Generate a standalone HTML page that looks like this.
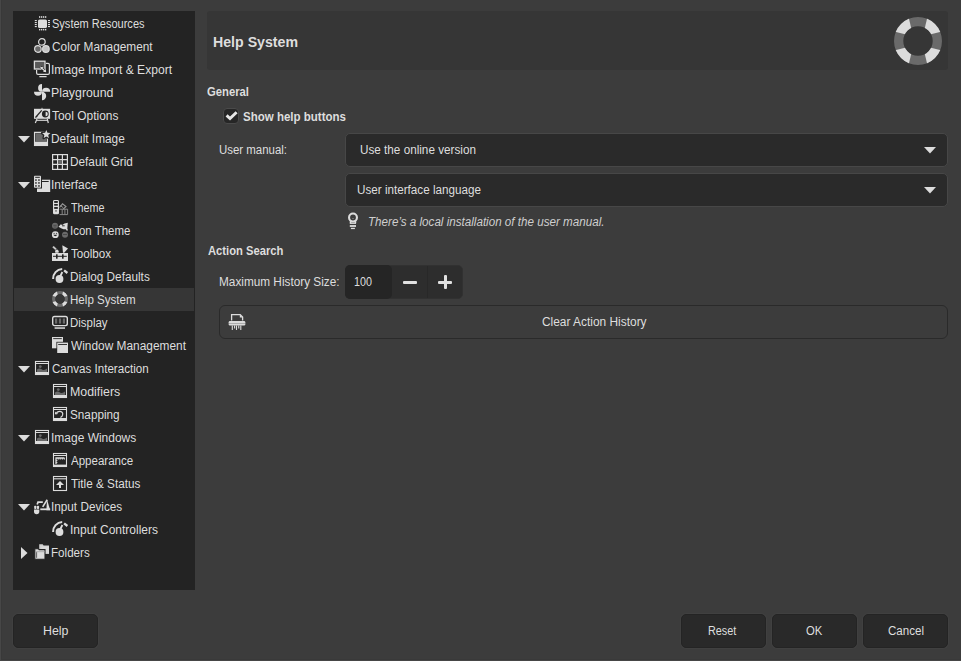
<!DOCTYPE html>
<html><head><meta charset="utf-8"><style>
html,body{margin:0;padding:0;}
body{width:961px;height:661px;background:#3c3c3c;position:relative;overflow:hidden;font-family:"Liberation Sans",sans-serif;}
.ic{position:absolute;display:block;}
.ic svg{display:block;}
.t{position:absolute;white-space:nowrap;line-height:1em;transform-origin:0 0;}
.t.c{text-align:center;}
.box{position:absolute;box-sizing:border-box;}
</style></head><body>
<div class="box" style="left:0;top:0;width:1px;height:661px;background:#474747"></div><div class="box" style="left:1px;top:0;width:1px;height:660px;background:#393939"></div><div class="box" style="left:1px;top:659px;width:960px;height:1px;background:#393939"></div><div class="box" style="left:0;top:660px;width:961px;height:1px;background:#464646"></div>
<div class="box" style="left:13px;top:11px;width:182px;height:579px;background:#232323"></div>
<div class="box" style="left:14px;top:288px;width:180px;height:23px;background:#363636"></div>
<div class="ic" style="left:34px;top:15px"><svg width="16" height="17" viewBox="0 0 16 17" style="overflow:visible"><rect x="4" y="4.4" width="9" height="8.6" rx="1.6" fill="#dcdcdc"/><rect x="5" y="1.2" width="1.3" height="1.6" fill="#dcdcdc"/><rect x="5" y="13.9" width="1.3" height="1.5" fill="#dcdcdc"/><rect x="0.8" y="5" width="2" height="1.1" fill="#dcdcdc"/><rect x="14" y="5" width="2" height="1.1" fill="#dcdcdc"/><rect x="7" y="1.2" width="1.3" height="1.6" fill="#dcdcdc"/><rect x="7" y="13.9" width="1.3" height="1.5" fill="#dcdcdc"/><rect x="0.8" y="7" width="2" height="1.1" fill="#dcdcdc"/><rect x="14" y="7" width="2" height="1.1" fill="#dcdcdc"/><rect x="9" y="1.2" width="1.3" height="1.6" fill="#dcdcdc"/><rect x="9" y="13.9" width="1.3" height="1.5" fill="#dcdcdc"/><rect x="0.8" y="9" width="2" height="1.1" fill="#dcdcdc"/><rect x="14" y="9" width="2" height="1.1" fill="#dcdcdc"/><rect x="11" y="1.2" width="1.3" height="1.6" fill="#dcdcdc"/><rect x="11" y="13.9" width="1.3" height="1.5" fill="#dcdcdc"/><rect x="0.8" y="11" width="2" height="1.1" fill="#dcdcdc"/><rect x="14" y="11" width="2" height="1.1" fill="#dcdcdc"/></svg></div><div class="ic" style="left:34px;top:38px"><svg width="16" height="17" viewBox="0 0 16 17" style="overflow:visible"><circle cx="7.9" cy="3.9" r="3.3" fill="none" stroke="#dcdcdc" stroke-width="1.2"/><circle cx="3.9" cy="11" r="3.3" fill="#6a6a6a" stroke="#dcdcdc" stroke-width="1.2"/><circle cx="11.9" cy="11" r="3.3" fill="#c4c4c4" stroke="#dcdcdc" stroke-width="1.2"/></svg></div><div class="ic" style="left:34px;top:61px"><svg width="16" height="17" viewBox="0 0 16 17" style="overflow:visible"><path d="M4 2.4H14A1.4 1.4 0 0 1 15.4 3.8V12A1.4 1.4 0 0 1 14 13.4H4A1.4 1.4 0 0 1 2.6 12V3.8Z" fill="#232323" stroke="#dcdcdc" stroke-width="1.2"/><rect x="-0.4" y="-0.6" width="12.4" height="9.6" fill="#232323"/><rect x="0.4" y="0.2" width="10.6" height="7.8" fill="#5a5a5a" stroke="#dcdcdc" stroke-width="1.3"/><path d="M6.5 6L12 11" stroke="#232323" stroke-width="3"/><path d="M7 6.5L11.5 10.5" stroke="#dcdcdc" stroke-width="1.4"/><path d="M6.3 5.8L9.5 6.3L6.8 9Z M12.2 11.2L9 10.7L11.7 8Z" fill="#dcdcdc"/><rect x="5.2" y="15" width="7.5" height="1.3" rx="0.6" fill="#dcdcdc"/></svg></div><div class="ic" style="left:34px;top:84px"><svg width="16" height="17" viewBox="0 0 16 17" style="overflow:visible"><g fill="#dcdcdc"><path d="M8 7.8V0A3.9 3.9 0 0 0 8 7.8Z"/><path d="M8 7.8H16.2A4.1 4.1 0 0 0 8 7.8Z"/><path d="M8 7.8V16.2A4.2 4.2 0 0 0 8 7.8Z"/><path d="M8 7.8H0A4 4 0 0 0 8 7.8Z"/></g></svg></div><div class="ic" style="left:34px;top:107px"><svg width="16" height="17" viewBox="0 0 16 17" style="overflow:visible"><path d="M6.7 1.6Q8 -0.3 9.3 1.6Z" fill="#dcdcdc"/><rect x="0" y="1.8" width="16.1" height="10" fill="#dcdcdc"/><path d="M1.5 10.5L7.7 3.3" stroke="#232323" stroke-width="1.2"/><path d="M1.2 10.8L3 8.8L3.6 9.5Z" fill="#232323"/><circle cx="11.3" cy="7" r="3.4" fill="#232323"/><path d="M11.6 4.8A2.2 2.2 0 0 1 11.6 9.2Z" fill="#dcdcdc"/><path d="M1.3 16L3 12M14.3 16L13.3 12" stroke="#dcdcdc" stroke-width="1.2" fill="none"/><path d="M3 13.3H13" stroke="#dcdcdc" stroke-width="1.1"/></svg></div><div class="ic" style="left:34px;top:130px"><svg width="16" height="17" viewBox="0 0 16 17" style="overflow:visible"><rect x="0.6" y="2.4" width="12.8" height="13" fill="none" stroke="#dcdcdc" stroke-width="1.3"/><rect x="2" y="3.3" width="10.3" height="8.4" fill="#6a6a6a"/><rect x="0" y="11.8" width="14" height="4.2" fill="#dcdcdc"/><path d="M12.30 0.00L13.48 2.78L16.48 3.04L14.20 5.02L14.89 7.96L12.30 6.40L9.71 7.96L10.40 5.02L8.12 3.04L11.12 2.78Z" fill="#232323" stroke="#232323" stroke-width="2.6" stroke-linejoin="round"/><path d="M12.30 0.00L13.48 2.78L16.48 3.04L14.20 5.02L14.89 7.96L12.30 6.40L9.71 7.96L10.40 5.02L8.12 3.04L11.12 2.78Z" fill="#dcdcdc"/></svg></div><svg class="ic" style="left:18px;top:136px" width="12" height="7" viewBox="0 0 12 7"><path d="M0 0H12L6 6.5Z" fill="#dcdcdc"/></svg><div class="ic" style="left:52px;top:153px"><svg width="16" height="17" viewBox="0 0 16 17" style="overflow:visible"><rect x="0.6" y="1.6" width="14.8" height="14.8" fill="none" stroke="#dcdcdc" stroke-width="1.2"/><path d="M5.6 1.6V16.4M10.4 1.6V16.4M0.6 6.6H15.4M0.6 11.4H15.4" stroke="#dcdcdc" stroke-width="1.2"/><rect x="6.2" y="7.2" width="3.6" height="3.6" fill="#6a6a6a"/></svg></div><div class="ic" style="left:34px;top:176px"><svg width="16" height="17" viewBox="0 0 16 17" style="overflow:visible"><rect x="2.4" y="3.2" width="14.3" height="13.3" fill="#232323"/><rect x="3" y="3.7" width="13.2" height="12.3" fill="#dcdcdc"/><path d="M8 5.5H14.7" stroke="#232323" stroke-width="1"/><rect x="-0.5" y="-0.7" width="8.5" height="13.2" fill="#232323"/><rect x="0" y="-0.2" width="7" height="12" rx="0.8" fill="#dcdcdc"/><rect x="1.2" y="0.8" width="4.6" height="1" fill="#232323"/><g fill="#232323"><rect x="1.2" y="3.3" width="1.5" height="1.5"/><rect x="4.2" y="3.3" width="1.5" height="1.5"/><rect x="1.2" y="6.2" width="1.5" height="1.5"/><rect x="4.2" y="6.2" width="1.5" height="1.5"/><rect x="1.2" y="9.2" width="1.5" height="1.5"/><rect x="4.2" y="9.2" width="1.5" height="1.5"/></g></svg></div><svg class="ic" style="left:18px;top:182px" width="12" height="7" viewBox="0 0 12 7"><path d="M0 0H12L6 6.5Z" fill="#dcdcdc"/></svg><div class="ic" style="left:52px;top:199px"><svg width="16" height="17" viewBox="0 0 16 17" style="overflow:visible"><path d="M7.6 10.2H15.6V15.6H7.6" fill="none" stroke="#888" stroke-width="1"/><path d="M10.2 10.2V15.6M12.9 10.2V15.6" stroke="#888" stroke-width="1"/><path d="M7.5 8.5L10.5 4.8L14 7.5L11.2 10.2" fill="none" stroke="#999" stroke-width="1.1"/><path d="M8.3 6.5L11.2 8.7" stroke="#999" stroke-width="0.9"/><rect x="1" y="1" width="6" height="14.3" rx="1.4" fill="#dcdcdc"/><g fill="#232323"><rect x="2.2" y="2" width="3.6" height="1.9"/><rect x="2.2" y="5" width="3.6" height="1.7"/><rect x="2.2" y="8" width="3.6" height="1.9"/><rect x="3.4" y="11.3" width="1.2" height="1.2"/></g></svg></div><div class="ic" style="left:52px;top:222px"><svg width="16" height="17" viewBox="0 0 16 17" style="overflow:visible"><circle cx="3" cy="3.7" r="3" fill="#6a6a6a"/><path d="M1.3 3.3H4.7M1.6 5H4.4" stroke="#444" stroke-width="0.8"/><circle cx="3.3" cy="12.7" r="3.4" fill="#dcdcdc"/><path d="M1.2 12.8Q3.3 15.5 5.4 12.8Z" fill="#232323"/><path d="M1.5 11.4H2.7M3.9 11.4H5.1" stroke="#232323" stroke-width="0.8"/><circle cx="13" cy="12.7" r="3" fill="#6a6a6a"/><path d="M11 12.5H15" stroke="#444" stroke-width="0.9"/><path d="M6.5 4.8L8.8 2.2L10.2 3L12.5 1.6L15.8 0.7L15.3 6.5L16 8.3L14.8 8.7L13.8 7.2L11.5 7.3L9 6.2Z" fill="#dcdcdc"/><path d="M10 3.8H12.7" stroke="#232323" stroke-width="0.9"/></svg></div><div class="ic" style="left:52px;top:245px"><svg width="16" height="17" viewBox="0 0 16 17" style="overflow:visible"><rect x="0" y="8" width="16" height="8" fill="#dcdcdc"/><path d="M1 11.3H14.8" stroke="#232323" stroke-width="1"/><rect x="4" y="9.3" width="1.6" height="4.4" fill="#232323"/><rect x="10" y="9.3" width="1.6" height="4.4" fill="#232323"/><path d="M0.3 2.2L1.7 1L4.7 3.7L3.3 5Z" fill="#c8c8c8"/><path d="M3 5.8L5 4.3L6.8 6L6.5 7.7L3.3 7.7Z" fill="#dcdcdc"/><path d="M10.3 0.3L16 3.5L12.2 7.8L11 7.8Z" fill="#dcdcdc"/></svg></div><div class="ic" style="left:52px;top:268px"><svg width="16" height="17" viewBox="0 0 16 17" style="overflow:visible"><path d="M1.1 11A9.6 9.6 0 0 1 10.2 1" fill="none" stroke="#dcdcdc" stroke-width="2"/><path d="M12.1 2.3L15.4 5" stroke="#dcdcdc" stroke-width="2.3"/><circle cx="7.5" cy="11" r="3.9" fill="#dcdcdc"/><path d="M7.6 9.5L10.4 4" stroke="#dcdcdc" stroke-width="1.8"/></svg></div><div class="ic" style="left:52px;top:291px"><div style="width:16px;height:16px"><svg width="16" height="16" viewBox="-24 -24 48 48"><defs><clipPath id="rc16"><path clip-rule="evenodd" fill-rule="evenodd" d="M-24 0a24 24 0 1 0 48 0a24 24 0 1 0 -48 0ZM-14.7 0a14.7 14.7 0 1 0 29.4 0a14.7 14.7 0 1 0 -29.4 0Z"/></clipPath></defs><g clip-path="url(#rc16)"><rect x="-25" y="-25" width="50" height="50" fill="#6a6a6a"/><g fill="#dcdcdc"><path d="M4.86 -4.86L10.85 -30L30 -30L30 -10.85Z"/><path d="M4.86 4.86L10.85 30L30 30L30 10.85Z"/><path d="M-4.86 4.86L-10.85 30L-30 30L-30 10.85Z"/><path d="M-4.86 -4.86L-10.85 -30L-30 -30L-30 -10.85Z"/></g></g></svg></div></div><div class="ic" style="left:52px;top:314px"><svg width="16" height="17" viewBox="0 0 16 17" style="overflow:visible"><rect x="0.7" y="2.5" width="14.6" height="9.1" rx="1.8" fill="none" stroke="#dcdcdc" stroke-width="1.4"/><rect x="3" y="4.5" width="2.2" height="5.1" fill="#6a6a6a"/><rect x="6.9" y="4.5" width="2.2" height="5.1" fill="#6a6a6a"/><rect x="10.8" y="4.5" width="2.2" height="5.1" fill="#6a6a6a"/><rect x="2.6" y="13.3" width="10.4" height="1.5" fill="#dcdcdc"/></svg></div><div class="ic" style="left:52px;top:337px"><svg width="16" height="17" viewBox="0 0 16 17" style="overflow:visible"><rect x="0" y="0" width="11" height="11.3" fill="#dcdcdc"/><rect x="1.2" y="1.2" width="8.6" height="0.9" fill="#232323"/><rect x="4.4" y="4.8" width="12.4" height="12" fill="#232323"/><rect x="5.2" y="5.6" width="10.8" height="10.4" fill="#dcdcdc"/><rect x="6.2" y="7" width="8.8" height="0.9" fill="#232323"/></svg></div><div class="ic" style="left:34px;top:360px"><svg width="16" height="17" viewBox="0 0 16 17" style="overflow:visible"><rect x="1.5" y="1.5" width="13" height="13" fill="none" stroke="#dcdcdc" stroke-width="1.1"/><path d="M1 3.5H15" stroke="#dcdcdc" stroke-width="1"/><path d="M3 9.6Q5.5 7.6 8 9.4Q10.5 10.8 13 8.6V12H3Z" fill="#6a6a6a"/><circle cx="6.3" cy="6.6" r="1.4" fill="#6a6a6a"/><rect x="1" y="12" width="14" height="3" fill="#dcdcdc"/></svg></div><svg class="ic" style="left:18px;top:366px" width="12" height="7" viewBox="0 0 12 7"><path d="M0 0H12L6 6.5Z" fill="#dcdcdc"/></svg><div class="ic" style="left:52px;top:383px"><svg width="16" height="17" viewBox="0 0 16 17" style="overflow:visible"><rect x="1.5" y="1.5" width="13" height="13" fill="none" stroke="#dcdcdc" stroke-width="1.1"/><path d="M1 3.5H15" stroke="#dcdcdc" stroke-width="1"/><path d="M3 9.6Q5.5 7.6 8 9.4Q10.5 10.8 13 8.6V12H3Z" fill="#6a6a6a"/><circle cx="6.3" cy="6.6" r="1.4" fill="#6a6a6a"/><rect x="1" y="12" width="14" height="3" fill="#dcdcdc"/></svg></div><div class="ic" style="left:52px;top:406px"><svg width="16" height="17" viewBox="0 0 16 17" style="overflow:visible"><rect x="1.5" y="1.5" width="13" height="13" fill="none" stroke="#dcdcdc" stroke-width="1.1"/><path d="M1 3.5H15" stroke="#dcdcdc" stroke-width="1"/><rect x="1" y="12" width="14" height="3" fill="#dcdcdc"/><path d="M4 7.4Q6.2 4.8 9 5.6Q11.4 6.6 10.6 9.2Q10.1 10.6 8.4 11.5" fill="none" stroke="#dcdcdc" stroke-width="1.1"/><path d="M3.4 8L3.8 5.8M3.4 8L5.6 7.6" stroke="#dcdcdc" stroke-width="1"/></svg></div><div class="ic" style="left:34px;top:429px"><svg width="16" height="17" viewBox="0 0 16 17" style="overflow:visible"><rect x="1.5" y="1.5" width="13" height="13" fill="none" stroke="#dcdcdc" stroke-width="1.1"/><path d="M1 3.5H15" stroke="#dcdcdc" stroke-width="1"/><path d="M3 9.6Q5.5 7.6 8 9.4Q10.5 10.8 13 8.6V12H3Z" fill="#6a6a6a"/><circle cx="6.3" cy="6.6" r="1.4" fill="#6a6a6a"/><rect x="1" y="12" width="14" height="3" fill="#dcdcdc"/></svg></div><svg class="ic" style="left:18px;top:435px" width="12" height="7" viewBox="0 0 12 7"><path d="M0 0H12L6 6.5Z" fill="#dcdcdc"/></svg><div class="ic" style="left:52px;top:452px"><svg width="16" height="17" viewBox="0 0 16 17" style="overflow:visible"><rect x="1.5" y="1.5" width="13" height="13" fill="none" stroke="#dcdcdc" stroke-width="1.1"/><path d="M1 3.5H15" stroke="#dcdcdc" stroke-width="1"/><path d="M4 12V6H12.5" fill="none" stroke="#dcdcdc" stroke-width="1.3"/><path d="M6.2 6V7.6M8.2 6V7.6M10.3 6V7.6M12.3 6V7.6M4 8.6H5.4M4 10.6H5.4" stroke="#dcdcdc" stroke-width="1"/><rect x="1" y="12.6" width="14" height="2.4" fill="#dcdcdc"/></svg></div><div class="ic" style="left:52px;top:475px"><svg width="16" height="17" viewBox="0 0 16 17" style="overflow:visible"><rect x="1.5" y="1.5" width="13" height="14" fill="none" stroke="#dcdcdc" stroke-width="1.1"/><path d="M1 3.8H15" stroke="#dcdcdc" stroke-width="1.1"/><path d="M8 6L12 10H9V13H7V10H4Z" fill="#dcdcdc"/></svg></div><div class="ic" style="left:34px;top:498px"><svg width="16" height="17" viewBox="0 0 16 17" style="overflow:visible"><rect x="0.2" y="7.7" width="2.2" height="3.3" rx="0.8" fill="#dcdcdc"/><rect x="2.9" y="7.7" width="2.2" height="3.3" rx="0.8" fill="#dcdcdc"/><path d="M0 11.6H5.3V13.5A2.65 2.65 0 0 1 0 13.5Z" fill="#dcdcdc"/><path d="M3.2 6.5L4 4.2H8.8" fill="none" stroke="#dcdcdc" stroke-width="1.7"/><path d="M13 1.4L16.2 12.2H12.4Z" fill="#dcdcdc"/><rect x="6.3" y="10.4" width="9.9" height="1.8" fill="#dcdcdc"/><path d="M8.7 8.9L13.2 1.8" stroke="#dcdcdc" stroke-width="1.6"/></svg></div><svg class="ic" style="left:18px;top:504px" width="12" height="7" viewBox="0 0 12 7"><path d="M0 0H12L6 6.5Z" fill="#dcdcdc"/></svg><div class="ic" style="left:52px;top:521px"><svg width="16" height="17" viewBox="0 0 16 17" style="overflow:visible"><path d="M1.1 11A9.6 9.6 0 0 1 10.2 1" fill="none" stroke="#dcdcdc" stroke-width="2"/><path d="M12.1 2.3L15.4 5" stroke="#dcdcdc" stroke-width="2.3"/><circle cx="7.5" cy="11" r="3.9" fill="#dcdcdc"/><path d="M7.6 9.5L10.4 4" stroke="#dcdcdc" stroke-width="1.8"/></svg></div><div class="ic" style="left:34px;top:544px"><svg width="16" height="17" viewBox="0 0 16 17" style="overflow:visible"><path d="M5.2 0.2H8.7L9.6 1.4H15V9.7H5.2Z" fill="#cfcfcf"/><path d="M7.2 2.4H15V9.7H7.2Z" fill="#dadada"/><path d="M0.8 4.8H4.4L5.2 5.6H11V15.2H0.8Z" fill="#dcdcdc" stroke="#232323" stroke-width="1.1"/><path d="M1.2 7.7H10.6" stroke="#a0a0a0" stroke-width="0.8"/><path d="M2.6 8.2V13.8" stroke="#555" stroke-width="0.9"/></svg></div><svg class="ic" style="left:21px;top:547px" width="7" height="12" viewBox="0 0 7 12"><path d="M0 0V12L6.5 6Z" fill="#dcdcdc"/></svg>
<div class="box" style="left:207px;top:11px;width:741px;height:59px;background:#363636;border-radius:3px"></div>
<div class="ic" style="left:894px;top:17px"><svg width="48" height="48" viewBox="-24 -24 48 48"><defs><clipPath id="rc48"><path clip-rule="evenodd" fill-rule="evenodd" d="M-24 0a24 24 0 1 0 48 0a24 24 0 1 0 -48 0ZM-14.7 0a14.7 14.7 0 1 0 29.4 0a14.7 14.7 0 1 0 -29.4 0Z"/></clipPath></defs><g clip-path="url(#rc48)"><rect x="-25" y="-25" width="50" height="50" fill="#6a6a6a"/><g fill="#dcdcdc"><path d="M4.86 -4.86L10.85 -30L30 -30L30 -10.85Z"/><path d="M4.86 4.86L10.85 30L30 30L30 10.85Z"/><path d="M-4.86 4.86L-10.85 30L-30 30L-30 10.85Z"/><path d="M-4.86 -4.86L-10.85 -30L-30 -30L-30 -10.85Z"/></g></g></svg></div>
<div class="box" style="left:223px;top:108px;width:16px;height:15.5px;background:#262626;border:1px solid #4a4a4a;border-radius:4px"></div>
<svg class="ic" style="left:224px;top:109px" width="14" height="14" viewBox="0 0 14 14"><path d="M2.6 6.4L6 9.6L12.6 3.2" fill="none" stroke="#e6e6e6" stroke-width="2.9" stroke-linecap="butt" stroke-linejoin="miter"/></svg>
<div class="box" style="left:345px;top:133px;width:603px;height:34px;background:#2a2a2a;border:1px solid #474747;border-radius:5px"></div>
<svg class="ic" style="left:924px;top:146.5px" width="12" height="7" viewBox="0 0 12 7"><path d="M0 0H12L6 6.5Z" fill="#dcdcdc"/></svg>
<div class="box" style="left:345px;top:173px;width:603px;height:34px;background:#2a2a2a;border:1px solid #474747;border-radius:5px"></div>
<svg class="ic" style="left:924px;top:186.5px" width="12" height="7" viewBox="0 0 12 7"><path d="M0 0H12L6 6.5Z" fill="#dcdcdc"/></svg>
<svg class="ic" style="left:342px;top:208px" width="24" height="24" viewBox="0 0 24 24"><circle cx="11" cy="9.5" r="3.95" fill="none" stroke="#dcdcdc" stroke-width="2.1"/><path d="M8.6 12.2V15.2M13.4 12.2V15.2" stroke="#dcdcdc" stroke-width="1.6"/><rect x="7.8" y="14.5" width="6.2" height="1.4" fill="#dcdcdc"/><rect x="7.8" y="17.1" width="6.2" height="1.8" fill="#dcdcdc"/><rect x="8.9" y="19.8" width="4" height="1.3" fill="#dcdcdc"/><rect x="10.2" y="10.1" width="1.6" height="0.8" fill="#8a8a8a"/></svg>
<div class="box" style="left:345px;top:265px;width:118px;height:34px;background:#2d2d2d;border:1px solid #313131;border-radius:5px"></div>
<div class="box" style="left:345px;top:265px;width:47px;height:34px;background:#252525;border-radius:5px"></div>
<div class="box" style="left:427px;top:266px;width:1px;height:32px;background:#282828"></div>
<div class="box" style="left:403px;top:280.5px;width:14px;height:3px;background:#e0e0e0;border-radius:1px"></div>
<div class="box" style="left:438px;top:280.5px;width:14px;height:3px;background:#e0e0e0;border-radius:1px"></div>
<div class="box" style="left:443.5px;top:275px;width:3px;height:14px;background:#e0e0e0;border-radius:1px"></div>
<div class="box" style="left:219px;top:305px;width:729px;height:34px;border:1px solid #2a2a2a;border-radius:6px"></div>
<svg class="ic" style="left:228px;top:313px" width="18" height="18" viewBox="0 0 18 18"><path d="M3.6 7.6V1.7H12.2L14.6 4.1V7.6" fill="none" stroke="#dcdcdc" stroke-width="1.3"/><path d="M11.8 1.6V4.5H14.7Z" fill="#dcdcdc"/><rect x="0.7" y="8" width="16.6" height="4.4" rx="1.2" fill="#dcdcdc"/><path d="M1 10.5H17" stroke="#9a9a9a" stroke-width="0.7"/><path d="M4.3 12.4V17M6.6 12.4V15.6M8.5 12.4V17M10.75 12.4V15.6M12.8 12.4V17" stroke="#dcdcdc" stroke-width="1.1"/></svg>
<div class="box" style="left:13px;top:614px;width:85px;height:34px;background:#292929;border:1px solid #242424;border-radius:5px;box-shadow:0 0 0 1px #404040"></div>
<div class="box" style="left:681px;top:614px;width:85px;height:34px;background:#292929;border:1px solid #242424;border-radius:5px;box-shadow:0 0 0 1px #404040"></div>
<div class="box" style="left:772px;top:614px;width:85px;height:34px;background:#292929;border:1px solid #242424;border-radius:5px;box-shadow:0 0 0 1px #404040"></div>
<div class="box" style="left:863px;top:614px;width:85px;height:34px;background:#292929;border:1px solid #242424;border-radius:5px;box-shadow:0 0 0 1px #404040"></div>
<div class="t" id="t0" style="font-size:12px;font-weight:400;font-style:normal;color:#dedede;top:17.84px;left:52.00px;transform:scaleX(0.9188)">System Resources</div><div class="t" id="t1" style="font-size:12px;font-weight:400;font-style:normal;color:#dedede;top:40.84px;left:52.00px;transform:scaleX(0.9863)">Color Management</div><div class="t" id="t2" style="font-size:12px;font-weight:400;font-style:normal;color:#dedede;top:63.84px;left:50.99px;transform:scaleX(1.0084)">Image Import &amp; Export</div><div class="t" id="t3" style="font-size:12px;font-weight:400;font-style:normal;color:#dedede;top:86.84px;left:50.97px;transform:scaleX(1.0288)">Playground</div><div class="t" id="t4" style="font-size:12px;font-weight:400;font-style:normal;color:#dedede;top:109.84px;left:52.00px;transform:scaleX(0.9955)">Tool Options</div><div class="t" id="t5" style="font-size:12px;font-weight:400;font-style:normal;color:#dedede;top:132.84px;left:51.01px;transform:scaleX(0.9878)">Default Image</div><div class="t" id="t6" style="font-size:12px;font-weight:400;font-style:normal;color:#dedede;top:155.84px;left:70.01px;transform:scaleX(0.9825)">Default Grid</div><div class="t" id="t7" style="font-size:12px;font-weight:400;font-style:normal;color:#dedede;top:178.84px;left:51.01px;transform:scaleX(0.9913)">Interface</div><div class="t" id="t8" style="font-size:12px;font-weight:400;font-style:normal;color:#dedede;top:201.84px;left:70.95px;transform:scaleX(0.8974)">Theme</div><div class="t" id="t9" style="font-size:12px;font-weight:400;font-style:normal;color:#dedede;top:224.84px;left:70.02px;transform:scaleX(0.9556)">Icon Theme</div><div class="t" id="t10" style="font-size:12px;font-weight:400;font-style:normal;color:#dedede;top:247.84px;left:70.98px;transform:scaleX(0.9690)">Toolbox</div><div class="t" id="t11" style="font-size:12px;font-weight:400;font-style:normal;color:#dedede;top:270.84px;left:70.01px;transform:scaleX(0.9802)">Dialog Defaults</div><div class="t" id="t12" style="font-size:12px;font-weight:400;font-style:normal;color:#dedede;top:293.84px;left:70.02px;transform:scaleX(0.9657)">Help System</div><div class="t" id="t13" style="font-size:12px;font-weight:400;font-style:normal;color:#dedede;top:316.84px;left:70.02px;transform:scaleX(0.9538)">Display</div><div class="t" id="t14" style="font-size:12px;font-weight:400;font-style:normal;color:#dedede;top:339.84px;left:71.00px;transform:scaleX(0.9906)">Window Management</div><div class="t" id="t15" style="font-size:12px;font-weight:400;font-style:normal;color:#dedede;top:362.84px;left:52.00px;transform:scaleX(0.9660)">Canvas Interaction</div><div class="t" id="t16" style="font-size:12px;font-weight:400;font-style:normal;color:#dedede;top:385.84px;left:69.98px;transform:scaleX(1.0312)">Modifiers</div><div class="t" id="t17" style="font-size:12px;font-weight:400;font-style:normal;color:#dedede;top:408.84px;left:70.01px;transform:scaleX(0.9780)">Snapping</div><div class="t" id="t18" style="font-size:12px;font-weight:400;font-style:normal;color:#dedede;top:431.84px;left:51.00px;transform:scaleX(0.9988)">Image Windows</div><div class="t" id="t19" style="font-size:12px;font-weight:400;font-style:normal;color:#dedede;top:454.84px;left:70.98px;transform:scaleX(0.9615)">Appearance</div><div class="t" id="t20" style="font-size:12px;font-weight:400;font-style:normal;color:#dedede;top:477.84px;left:70.99px;transform:scaleX(0.9789)">Title &amp; Status</div><div class="t" id="t21" style="font-size:12px;font-weight:400;font-style:normal;color:#dedede;top:500.84px;left:51.02px;transform:scaleX(0.9792)">Input Devices</div><div class="t" id="t22" style="font-size:12px;font-weight:400;font-style:normal;color:#dedede;top:523.84px;left:70.00px;transform:scaleX(1.0000)">Input Controllers</div><div class="t" id="t23" style="font-size:12px;font-weight:400;font-style:normal;color:#dedede;top:546.84px;left:51.03px;transform:scaleX(0.9692)">Folders</div><div class="t" id="t24" style="font-size:14px;font-weight:700;font-style:normal;color:#dedede;top:35.03px;left:213.40px;transform:scaleX(1.0120)">Help System</div><div class="t" id="t25" style="font-size:12px;font-weight:700;font-style:normal;color:#dedede;top:86.04px;left:207.03px;transform:scaleX(0.9386)">General</div><div class="t" id="t26" style="font-size:12px;font-weight:700;font-style:normal;color:#dedede;top:110.64px;left:242.63px;transform:scaleX(0.9598)">Show help buttons</div><div class="t" id="t27" style="font-size:12px;font-weight:400;font-style:normal;color:#dedede;top:143.64px;left:219.05px;transform:scaleX(0.9529)">User manual:</div><div class="t" id="t28" style="font-size:12px;font-weight:400;font-style:normal;color:#dedede;top:143.94px;left:360.42px;transform:scaleX(0.9763)">Use the online version</div><div class="t" id="t29" style="font-size:12px;font-weight:400;font-style:normal;color:#dedede;top:183.84px;left:357.21px;transform:scaleX(0.9732)">User interface language</div><div class="t" id="t30" style="font-size:12px;font-weight:400;font-style:italic;color:#cfcfcf;top:216.14px;left:367.62px;transform:scaleX(0.9694)">There&#8217;s a local installation of the user manual.</div><div class="t" id="t31" style="font-size:12px;font-weight:700;font-style:normal;color:#dedede;top:245.04px;left:207.58px;transform:scaleX(0.9346)">Action Search</div><div class="t" id="t32" style="font-size:12px;font-weight:400;font-style:normal;color:#dedede;top:276.44px;left:219.01px;transform:scaleX(0.9826)">Maximum History Size:</div><div class="t" id="t33" style="font-size:12px;font-weight:400;font-style:normal;color:#dedede;top:275.84px;left:354.24px;transform:scaleX(0.8950)">100</div><div class="t" id="t34" style="font-size:12px;font-weight:400;font-style:normal;color:#dedede;top:315.84px;left:541.80px;transform:scaleX(0.9924)">Clear Action History</div><div class="t" id="t35" style="font-size:12px;font-weight:400;font-style:normal;color:#dedede;top:624.84px;left:42.58px;transform:scaleX(1.0333)">Help</div><div class="t" id="t36" style="font-size:12px;font-weight:400;font-style:normal;color:#dedede;top:625.04px;left:708.29px;transform:scaleX(0.9032)">Reset</div><div class="t" id="t37" style="font-size:12px;font-weight:400;font-style:normal;color:#dedede;top:625.04px;left:806.00px;transform:scaleX(0.9412)">OK</div><div class="t" id="t38" style="font-size:12px;font-weight:400;font-style:normal;color:#dedede;top:625.04px;left:887.82px;transform:scaleX(0.9639)">Cancel</div>
</body></html>
